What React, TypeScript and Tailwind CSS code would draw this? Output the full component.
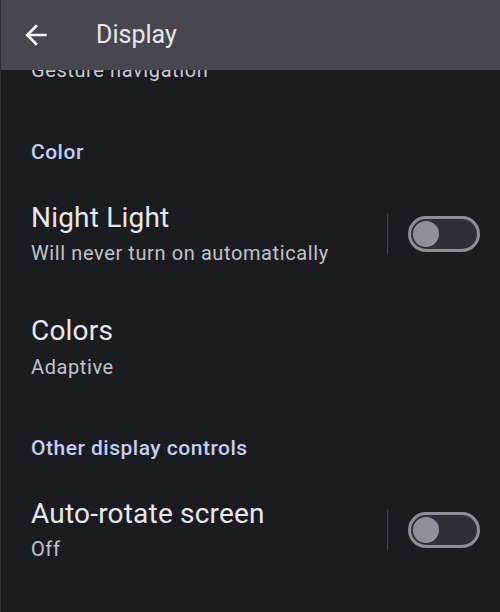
import React from "react";

const font = { fontFamily: "Roboto, 'Noto Sans', sans-serif" };

function Toggle() {
  return (
    <div className="flex h-[36px] w-[72px] items-center rounded-full border-[3px] border-[#8e8f97] bg-[#303136] pl-[2px]">
      <div className="h-[26px] w-[26px] rounded-full bg-[#8f9099]" />
    </div>
  );
}

function SwitchRow({ title, summary }: { title: string; summary: string }) {
  return (
    <div className="flex items-center pr-[20px]">
      <div className="flex flex-1 flex-col">
        <div className="text-[28px] leading-[32px] tracking-[0.2px] text-[#e8e8ec]">{title}</div>
        <div className="mt-[7px] text-[20px] leading-[24px] tracking-[0.6px] text-[#c2c3ca]">{summary}</div>
      </div>
      <div className="mr-[20px] h-[40px] w-px bg-[#46474d]" />
      <Toggle />
    </div>
  );
}

export default function App() {
  return (
    <div
      className="flex h-[612px] w-[500px] flex-col overflow-hidden border-l border-[#2e2f34] bg-[#1b1c20]"
      style={font}
    >
      <header className="relative z-10 flex h-[70px] shrink-0 items-center bg-[#47474d]">
        <svg viewBox="0 0 24 24" className="ml-[19px] h-[32px] w-[32px]" fill="#f2f2f5">
          <path d="M20 11H7.83l5.59-5.59L12 4l-8 8 8 8 1.41-1.41L7.83 13H20v-2z" />
        </svg>
        <h1 className="ml-[44px] text-[25px] font-normal text-[#e8e8ec]">Display</h1>
      </header>

      <div className="flex flex-col pl-[30px]">
        <div className="-mt-[12px] text-[20px] leading-[24px] tracking-[0.6px] text-[#c8c9d0]">
          Gesture navigation
        </div>

        <div className="mt-[58px] text-[21px] font-medium leading-[24px] tracking-[0.5px] text-[#c6cef6]">
          Color
        </div>

        <div className="mt-[38px]">
          <SwitchRow title="Night Light" summary="Will never turn on automatically" />
        </div>

        <div className="mt-[50px] flex flex-col">
          <div className="text-[28px] leading-[32px] tracking-[0.2px] text-[#e8e8ec]">Colors</div>
          <div className="mt-[8px] text-[20px] leading-[24px] tracking-[0.6px] text-[#c2c3ca]">Adaptive</div>
        </div>

        <div className="mt-[57px] text-[21px] font-medium leading-[24px] tracking-[0.5px] text-[#c6cef6]">
          Other display controls
        </div>

        <div className="mt-[38px]">
          <SwitchRow title="Auto-rotate screen" summary="Off" />
        </div>
      </div>
    </div>
  );
}
